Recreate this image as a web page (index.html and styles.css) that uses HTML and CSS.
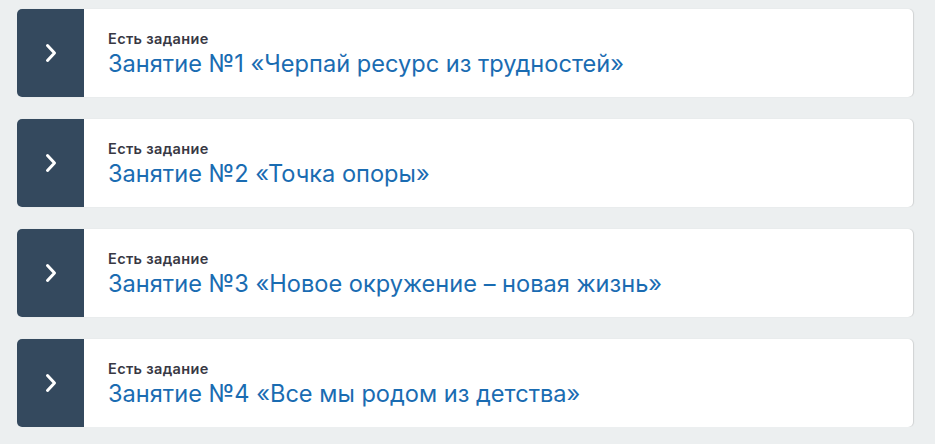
FILE: index.html
```html
<!DOCTYPE html>
<html lang="ru">
<head>
<meta charset="utf-8">
<link rel="stylesheet" href="styles.css">
</head>
<body>
<div class="list">
  <div class="card">
    <div class="toggle"><svg class="chev" width="16" height="20" viewBox="0 0 16 20"><path d="M4.5 2.5 L11.5 10 L4.5 17.5" fill="none" stroke="#fff" stroke-width="3" stroke-linecap="round" stroke-linejoin="round"/></svg></div>
    <div class="info">
      <div class="label">Есть задание</div>
      <div class="title">Занятие №1 «Черпай ресурс из трудностей»</div>
    </div>
  </div>
  <div class="card">
    <div class="toggle"><svg class="chev" width="16" height="20" viewBox="0 0 16 20"><path d="M4.5 2.5 L11.5 10 L4.5 17.5" fill="none" stroke="#fff" stroke-width="3" stroke-linecap="round" stroke-linejoin="round"/></svg></div>
    <div class="info">
      <div class="label">Есть задание</div>
      <div class="title">Занятие №2 «Точка опоры»</div>
    </div>
  </div>
  <div class="card">
    <div class="toggle"><svg class="chev" width="16" height="20" viewBox="0 0 16 20"><path d="M4.5 2.5 L11.5 10 L4.5 17.5" fill="none" stroke="#fff" stroke-width="3" stroke-linecap="round" stroke-linejoin="round"/></svg></div>
    <div class="info">
      <div class="label">Есть задание</div>
      <div class="title">Занятие №3 «Новое окружение – новая жизнь»</div>
    </div>
  </div>
  <div class="card">
    <div class="toggle"><svg class="chev" width="16" height="20" viewBox="0 0 16 20"><path d="M4.5 2.5 L11.5 10 L4.5 17.5" fill="none" stroke="#fff" stroke-width="3" stroke-linecap="round" stroke-linejoin="round"/></svg></div>
    <div class="info">
      <div class="label">Есть задание</div>
      <div class="title">Занятие №4 «Все мы родом из детства»</div>
    </div>
  </div>
</div>
</body>
</html>
```
FILE: styles.css
```css
html, body {
  margin: 0;
  padding: 0;
  background: #eceff0;
}
body {
  font-family: Inter, "Noto Sans", sans-serif;
}
.list {
  display: flex;
  flex-direction: column;
  gap: 22px;
  padding: 9px 22px 0 17px;
}
.card {
  display: flex;
  height: 88px;
  background: #fff;
  border-radius: 5px;
  overflow: hidden;
  box-shadow: 1px 0 1px rgba(0,0,0,0.12);
}
.toggle {
  width: 67px;
  flex: none;
  background: #34495e;
  display: flex;
  align-items: center;
  justify-content: center;
}
.chev {
  margin-left: 1px;
}
.info {
  display: flex;
  flex-direction: column;
  justify-content: center;
  padding-left: 24px;
  padding-top: 1px;
}
.label {
  font-size: 14.5px;
  font-weight: 600;
  letter-spacing: 0.35px;
  color: #383843;
  line-height: 18px;
}
.title {
  font-size: 23.6px;
  color: #1a6cb2;
  line-height: 28px;
  margin-top: 2px;
}
```
